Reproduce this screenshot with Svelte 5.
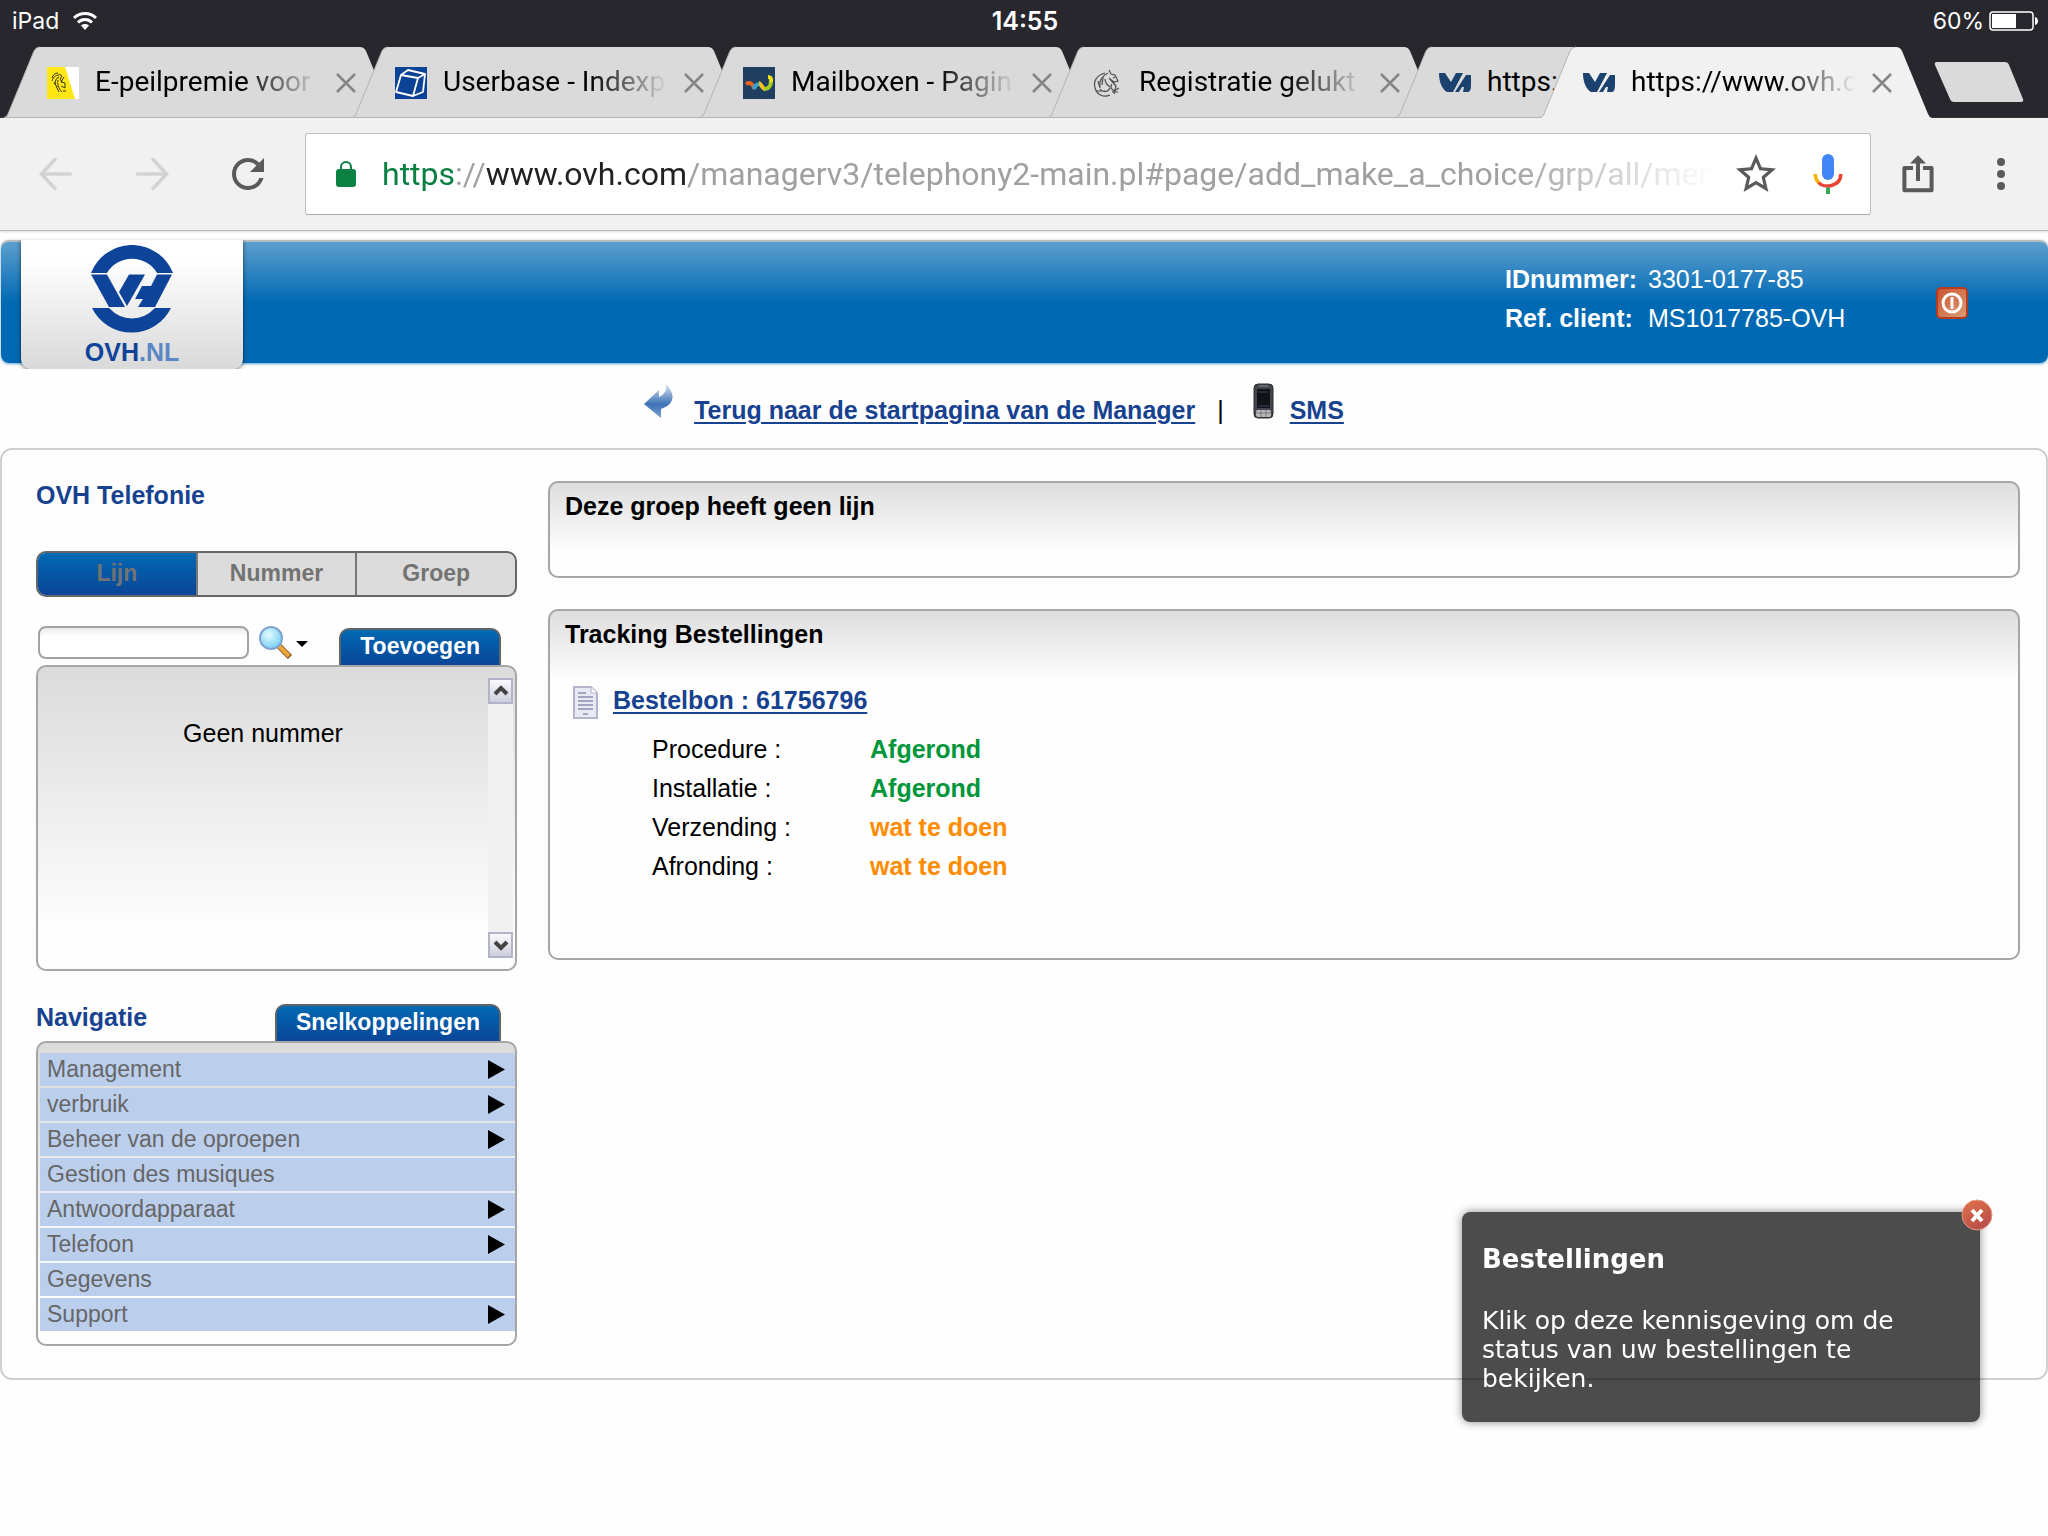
<script>
    const tabs = [
        { title: "E-peilpremie voor", icon: "lion" },
        { title: "Userbase - Indexp", icon: "cube" },
        { title: "Mailboxen - Pagin", icon: "wave" },
        { title: "Registratie gelukt", icon: "crest" },
        { title: "https:", icon: "ovh", tucked: true },
        { title: "https://www.ovh.c", icon: "ovh", active: true },
    ];

    const groups = ["Lijn", "Nummer", "Groep"];
    let currentGroup = $state("Lijn");
    let search = $state("");
    let showNotice = $state(true);

    const steps = [
        { name: "Procedure :", status: "Afgerond", done: true },
        { name: "Installatie :", status: "Afgerond", done: true },
        { name: "Verzending :", status: "wat te doen", done: false },
        { name: "Afronding :", status: "wat te doen", done: false },
    ];

    const menu = [
        { name: "Management", sub: true },
        { name: "verbruik", sub: true },
        { name: "Beheer van de oproepen", sub: true },
        { name: "Gestion des musiques", sub: false },
        { name: "Antwoordapparaat", sub: true },
        { name: "Telefoon", sub: true },
        { name: "Gegevens", sub: false },
        { name: "Support", sub: true },
    ];
</script>

{#snippet favicon(name)}
    <svg class="favicon" viewBox="0 0 32 32" aria-hidden="true">
        {#if name === "lion"}
            <rect width="32" height="32" fill="#fff" />
            <path d="M0 0h18l10 32H0z" fill="#ffe615" />
            <g fill="none" stroke="#3a3512" stroke-width="1">
                <path d="M11 6c-3 0-5 2-6 5M12 8c-4 0-6 3-7 6M12 10c-3 1-4 4-4 8M11 13c-1 3 0 8 4 12" />
                <path d="M12 7l3 2-2 3 2 3M17 10l-3 5 4 1v5l-4-2M9 19l3 6M16 24h3M7 15l3 5" />
            </g>
        {:else if name === "cube"}
            <rect width="32" height="32" fill="#0c4296" />
            <g fill="none" stroke="#fff" stroke-width="1.800" stroke-linejoin="round">
                <path d="M6 8L1 25l17 4 5-18z" />
                <path d="M6 8l7-5 17 4-7 4M30 7l-2 18-10 4" />
            </g>
        {:else if name === "wave"}
            <rect width="32" height="32" fill="#203f60" />
            <g fill="none" stroke-width="4">
                <path d="M3 17c4-2 6-1 9 5" stroke="#e8641b" />
                <path d="M11 22c1-4 3-5 6-5" stroke="#2fa3dc" />
                <path d="M16 16c2 0 3 6 6 6" stroke="#f3c316" />
                <path d="M21 22c5 0 7-4 7-8" stroke="#a5cc22" />
                <path d="M28 15c1-4-1-5-3-5" stroke="#f0e016" />
            </g>
        {:else if name === "crest"}
            <g fill="none" stroke="#4d4d4d" stroke-width="1.200">
                <path d="M14 6C6 8 2 14 4 21c2 7 9 10 15 7" />
                <path d="M17 6C11 9 8 14 9 20M18 3l2 4 4 1 3 6-4 1-4-3M18 11l7 8-2 8" />
                <path d="M9 22c3 4 8 3 10-1M6 24h8M21 17c-2 2-1 5 2 7l5-3M27 25h-6M7 14l2 7M12 10l-1 8M24 10l-2 1M14 12c0 4 2 6 5 8" />
            </g>
        {:else}
            <g fill="#1b426f">
                <path d="M0 6h6l6 9 5-9h7L14 25H8C3 22 0 15 0 6z" />
                <path d="M27 8h5v10c0 4-1 7-3 7h-5l1-5h-2l-3 5h-4z" />
            </g>
        {/if}
    </svg>
{/snippet}

<div class="browser">
    <div class="statusbar">
        <span class="device">
            iPad
            <svg width="26" height="20" viewBox="0 0 26 20" aria-hidden="true">
                <g fill="none" stroke="#fff" stroke-width="3">
                    <path d="M2 7c6-6 16-6 22 0" />
                    <path d="M6 11.500c4-4 10-4 14 0" />
                </g>
                <path d="M9 14.500c2-2 6-2 8 0l-4 4.500z" fill="#fff" />
            </svg>
        </span>
        <span class="clock">14:55</span>
        <span class="battery">
            60%
            <svg width="49" height="20" viewBox="0 0 49 20" aria-hidden="true">
                <rect x="1" y="1" width="43" height="18" rx="3" fill="none" stroke="#fff" stroke-width="1.500" />
                <rect x="3" y="3" width="24" height="14" fill="#fff" />
                <path d="M46 6c4 1 4 7 0 8z" fill="#fff" />
            </svg>
        </span>
    </div>

    <div class="tabstrip">
        {#each tabs as tab}
            <div class="tab" class:active={tab.active} class:tucked={tab.tucked}>
                <svg class="shape" viewBox="0 0 388 71" preserveAspectRatio="none" aria-hidden="true">
                    <path class="fill" d="M-2 71Q1 70 2 67L28 4Q30 0 34 0H354Q358 0 360 4L386 67Q387 70 390 71z" />
                    <path class="edge" d="M-2 70.500Q1 70 2 67L28 4Q30 0 34 0" />
                    <path class="base" d="M0 70.500H388" />
                </svg>
                {@render favicon(tab.icon)}
                <span class="title">{tab.title}</span>
                <button class="close" aria-label="Close tab">
                    <svg width="20" height="20" viewBox="0 0 20 20">
                        <path d="M1 1l18 18M19 1L1 19" stroke="#858585" stroke-width="2.500" />
                    </svg>
                </button>
            </div>
        {/each}
        <button class="newtab" aria-label="New tab">
            <svg width="90" height="40" viewBox="0 0 90 40">
                <path d="M3 0h68q3 0 4 3l14 34q1 3-2 3H20q-3 0-4-3L1 3q-1-3 2-3z" fill="#dadada" />
            </svg>
        </button>
    </div>

    <div class="toolbar">
        <button class="tool" aria-label="Back">
            <svg viewBox="0 0 24 24"><path d="M19.200 12H5M11.500 4.800L4.700 12l6.800 7.200" fill="none" stroke="#d3d3d3" stroke-width="1.800" stroke-linecap="round" /></svg>
        </button>
        <button class="tool" aria-label="Forward">
            <svg viewBox="0 0 24 24"><path d="M4.800 12H19M12.500 4.800l6.800 7.200-6.800 7.200" fill="none" stroke="#d3d3d3" stroke-width="1.800" stroke-linecap="round" /></svg>
        </button>
        <button class="tool" aria-label="Reload">
            <svg viewBox="0 0 24 24"><path d="M17.650 6.350C16.200 4.900 14.210 4 12 4c-4.420 0-7.990 3.580-7.990 8s3.570 8 7.990 8c3.730 0 6.840-2.550 7.730-6h-2.080c-.82 2.330-3.040 4-5.650 4-3.310 0-6-2.690-6-6s2.690-6 6-6c1.660 0 3.140.69 4.220 1.780L13 11h7V4l-2.350 2.350z" fill="#5a5a5a" /></svg>
        </button>
        <div class="omnibox">
            <svg class="lock" width="20" height="26" viewBox="0 0 20 26" aria-hidden="true">
                <rect y="8" width="20" height="18" rx="3" fill="#0b8043" />
                <path d="M5 9V6a5 5 0 0 1 10 0v3" fill="none" stroke="#0b8043" stroke-width="2" />
            </svg>
            <span class="url"><span class="scheme">https</span>://<span class="host">www.ovh.com</span>/managerv3/telephony2-main.pl#page/add_make_a_choice/grp/all/men</span>
            <button class="tool" aria-label="Bookmark">
                <svg viewBox="0 0 24 24"><path d="M22 9.240l-7.190-.62L12 2 9.190 8.630 2 9.240l5.460 4.730L5.820 21 12 17.270 18.180 21l-1.630-7.030L22 9.240zM12 15.400l-3.760 2.270 1-4.280-3.320-2.880 4.380-.38L12 6.100l1.710 4.040 4.380.38-3.320 2.880 1 4.280L12 15.400z" fill="#5a5a5a" /></svg>
            </button>
            <button class="tool" aria-label="Voice search">
                <svg viewBox="0 0 24 24">
                    <rect x="9" y="2" width="6" height="13" rx="3" fill="#4285f4" />
                    <path d="M5.600 12c0 1.800.7 3.300 1.800 4.400" fill="none" stroke="#f4b400" stroke-width="1.800" />
                    <path d="M7.300 16.300c2.600 2.900 11 2.300 11.100-4.300" fill="none" stroke="#ea4335" stroke-width="1.800" />
                    <path d="M11 18.800h2V22h-2z" fill="#34a853" />
                </svg>
            </button>
        </div>
        <button class="tool share" aria-label="Share">
            <svg viewBox="0 0 24 24">
                <path d="M9.500 9H5.200v11.100h13.600V9h-4.300" fill="none" stroke="#5a5a5a" stroke-width="2" stroke-linejoin="round" />
                <path d="M12 15.500V5" stroke="#5a5a5a" stroke-width="2" />
                <path d="M8 6.800L12 2.600l4 4.200z" fill="#5a5a5a" />
            </svg>
        </button>
        <button class="tool" aria-label="Menu">
            <svg viewBox="0 0 24 24" fill="#5a5a5a"><circle cx="12" cy="6" r="2" /><circle cx="12" cy="12" r="2" /><circle cx="12" cy="18" r="2" /></svg>
        </button>
    </div>
</div>

<div class="page">
    <header>
        <div class="logo">
            <svg width="82" height="88" viewBox="0 0 82 88" aria-hidden="true">
                <g fill="#0d4499">
                    <path d="M0 28A44 44 0 0 1 82 28H66A29 29 0 0 0 16 28z" />
                    <path d="M1 63H18Q28 73.500 41 73.500T64 63H80A44 44 0 0 1 1 63z" />
                    <path d="M0 29.500H16L34 62H18z" />
                    <path d="M38 29.500H54L36 61 28 47z" />
                    <path d="M66 29.500H81L64 62H47L52 54H44L51 41H60z" />
                </g>
            </svg>
            <strong>OVH<span>.NL</span></strong>
        </div>
        <dl>
            <dt>IDnummer:</dt>
            <dd>3301-0177-85</dd>
            <dt>Ref. client:</dt>
            <dd>MS1017785-OVH</dd>
        </dl>
        <button class="logout" aria-label="Log out">
            <svg width="32" height="32" viewBox="0 0 32 32">
                <defs>
                    <linearGradient id="power" x1="0" y1="0" x2="1" y2="1">
                        <stop offset="0" stop-color="#c9512e" />
                        <stop offset="1" stop-color="#dba078" />
                    </linearGradient>
                </defs>
                <rect x="1" y="1" width="30" height="30" rx="4" fill="url(#power)" stroke="#b73a1c" stroke-width="2" />
                <circle cx="16" cy="16" r="9" fill="none" stroke="#fff" stroke-width="3" />
                <path d="M16 10v12" stroke="#fff" stroke-width="3" />
            </svg>
        </button>
    </header>

    <nav class="links">
        <svg width="30" height="37" viewBox="0 0 30 37" aria-hidden="true">
            <defs>
                <linearGradient id="back" x1="0" y1="0" x2="0" y2="1">
                    <stop offset="0" stop-color="#dbe5f2" />
                    <stop offset=".6" stop-color="#3d72b4" />
                    <stop offset="1" stop-color="#7b9fce" />
                </linearGradient>
            </defs>
            <path d="M0 20L15 6v7c5-2 8-6 7-13 9 9 10 20-5 25v9z" fill="url(#back)" />
        </svg>
        <a class="home" href="#manager">Terug naar de startpagina van de Manager</a>
        <span class="bar">|</span>
        <svg width="21" height="38" viewBox="0 0 21 38" aria-hidden="true">
            <rect x="1" y="1" width="19" height="34" rx="4" fill="#42454b" stroke="#2b2d31" />
            <rect x="4" y="6" width="13" height="19" fill="#111318" />
            <path d="M6 3h9" stroke="#8b8e94" />
            <path d="M5 9h10M5 23h11" stroke="#3a4560" />
            <rect x="3" y="27" width="15" height="7" rx="2" fill="#b9b9b9" />
            <path d="M8 27v7M13 27v7M3 30h15" stroke="#777" />
        </svg>
        <a href="#sms">SMS</a>
    </nav>

    <main>
        <aside>
            <h2>OVH Telefonie</h2>
            <div class="segments">
                {#each groups as group}
                    <button
                        class:selected={currentGroup === group}
                        onclick={() => (currentGroup = group)}
                    >
                        {group}
                    </button>
                {/each}
            </div>

            <div class="search">
                <input type="text" aria-label="Zoeken" bind:value={search} />
                <button class="find" aria-label="Zoekopties">
                    <svg width="49" height="33" viewBox="0 0 49 33">
                        <defs>
                            <radialGradient id="lens" cx=".4" cy=".35" r=".7">
                                <stop offset="0" stop-color="#e2fbff" />
                                <stop offset="1" stop-color="#74cdf5" />
                            </radialGradient>
                        </defs>
                        <path d="M20 20l11 11" stroke="#8b5a20" stroke-width="6" />
                        <path d="M20 20l10 10" stroke="#eda63c" stroke-width="4" />
                        <circle cx="12" cy="12" r="11" fill="url(#lens)" stroke="#7fa3cf" stroke-width="2" />
                        <path d="M37 15h12l-6 6z" fill="#000" />
                    </svg>
                </button>
                <button class="flap">Toevoegen</button>
            </div>
            <div class="numbers">
                <p>Geen nummer</p>
                <div class="scroller">
                    <button aria-label="Omhoog">
                        <svg width="16" height="12" viewBox="0 0 16 12"><path d="M2 9l6-6 6 6" fill="none" stroke="#444" stroke-width="4" /></svg>
                    </button>
                    <button aria-label="Omlaag">
                        <svg width="16" height="12" viewBox="0 0 16 12"><path d="M2 3l6 6 6-6" fill="none" stroke="#444" stroke-width="4" /></svg>
                    </button>
                </div>
            </div>

            <div class="navhead">
                <h2>Navigatie</h2>
                <button class="flap">Snelkoppelingen</button>
            </div>
            <nav class="menu">
                {#each menu as item}
                    <a href="#menu">
                        {item.name}
                        {#if item.sub}
                            <svg width="17" height="19" viewBox="0 0 17 19" aria-hidden="true"><path d="M0 0l17 9.500L0 19z" /></svg>
                        {/if}
                    </a>
                {/each}
            </nav>
        </aside>

        <div class="content">
            <section class="notice">
                <h3>Deze groep heeft geen lijn</h3>
            </section>
            <section class="tracking">
                <h3>Tracking Bestellingen</h3>
                <div class="order">
                    <svg width="25" height="33" viewBox="0 0 25 33" aria-hidden="true">
                        <path d="M1 1h17l6 6v25H1z" fill="#e9e9f4" stroke="#b4b4cb" stroke-width="2" />
                        <path d="M18 1v6h6" fill="#fff" stroke="#b4b4cb" />
                        <path d="M5 7h8M5 11h15M5 15h15M5 19h15M5 23h15M10 28h5" stroke="#8d8db0" stroke-width="1.500" />
                    </svg>
                    <a href="#order">Bestelbon : 61756796</a>
                </div>
                <table>
                    <tbody>
                        {#each steps as step}
                            <tr>
                                <th scope="row">{step.name}</th>
                                <td class:done={step.done}>{step.status}</td>
                            </tr>
                        {/each}
                    </tbody>
                </table>
            </section>
        </div>
    </main>
</div>

{#if showNotice}
    <div class="toast" role="status">
        <h4>Bestellingen</h4>
        <p>Klik op deze kennisgeving om de status van uw bestellingen te bekijken.</p>
        <button aria-label="Sluiten" onclick={() => (showNotice = false)}>
            <svg width="32" height="32" viewBox="0 0 32 32">
                <defs>
                    <linearGradient id="dismiss" x1="0" y1="0" x2="0.500" y2="1">
                        <stop offset="0" stop-color="#e2714a" />
                        <stop offset="1" stop-color="#b9504a" />
                    </linearGradient>
                </defs>
                <circle cx="16" cy="16" r="15" fill="url(#dismiss)" stroke="#e79a86" />
                <path d="M11 11l10 11M21 11L11 22" stroke="#fff" stroke-width="4" />
            </svg>
        </button>
    </div>
{/if}

<style>
    :global(body) {
        margin: 0;
        background: #fefefe;
        font-family: "Liberation Sans", Arial, sans-serif;
        font-size: 25px;
        color: #000;
    }

    button {
        appearance: none;
        border: none;
        background: none;
        padding: 0;
        margin: 0;
        font: inherit;
        cursor: pointer;
    }

    svg {
        display: block;
        flex: none;
    }

    h2,
    h3,
    h4,
    p,
    dl,
    dd {
        margin: 0;
    }

    /* browser chrome */
    .browser {
        font-family: Roboto, sans-serif;
    }

    .statusbar {
        display: grid;
        grid-template-columns: 1fr auto 1fr;
        align-items: center;
        height: 41px;
        padding: 0 10px 0 12px;
        background: #28272d;
        color: #fff;
        font-family: Inter, sans-serif;
        font-size: 23px;
    }

    .device,
    .battery {
        display: flex;
        align-items: center;
        gap: 13px;
    }

    .battery {
        justify-content: flex-end;
        gap: 5px;
    }

    .clock {
        font-size: 25px;
        font-weight: 600;
    }

    .tabstrip {
        display: flex;
        height: 71px;
        padding: 6px 0 0 6px;
        background: #28272d;
    }

    .tab {
        position: relative;
        display: flex;
        align-items: center;
        flex: none;
        width: 388px;
        box-sizing: border-box;
        margin-right: -40px;
        padding: 0 38px 0 41px;
    }

    .tab.tucked {
        margin-right: -244px;
    }

    .tab.active {
        margin-right: 0;
    }

    .shape {
        position: absolute;
        inset: 0;
        width: 100%;
        height: 100%;
        overflow: visible;
    }

    .fill {
        fill: #dadada;
    }

    .active .fill {
        fill: #f1f1f1;
    }

    .edge,
    .base {
        fill: none;
        stroke: #b4b4b4;
    }

    .active .base {
        display: none;
    }

    .favicon {
        position: relative;
        width: 32px;
        height: 32px;
    }

    .title {
        position: relative;
        flex: 1;
        margin-left: 16px;
        padding-bottom: 2px;
        overflow: hidden;
        white-space: nowrap;
        font-size: 28px;
        mask-image: linear-gradient(to right, #000 65%, transparent);
    }

    .tucked .title {
        flex: none;
        mask-image: none;
    }

    .close {
        position: relative;
        margin-left: 16px;
    }

    .newtab {
        align-self: flex-start;
        margin: 15px 0 0 4px;
    }

    .toolbar {
        display: flex;
        align-items: center;
        height: 112px;
        padding: 0 23px 0 32px;
        background: #f1f1f1;
        border-bottom: 1px solid #b9b9b9;
        box-shadow: 0 1px 2px #ddd;
    }

    .tool {
        margin-right: 48px;
    }

    .tool svg {
        width: 48px;
        height: 48px;
    }

    .tool:last-child {
        margin-right: 0;
    }

    .omnibox {
        display: flex;
        align-items: center;
        flex: 1;
        min-width: 0;
        height: 80px;
        margin: 0 23px 0 -15px;
        padding: 0 18px 0 30px;
        background: #fff;
        border: 1px solid #c3c3c3;
        border-bottom-color: #a9a9a9;
        border-radius: 3px;
    }

    .omnibox .tool {
        margin: 0 0 0 24px;
    }

    .omnibox .tool:nth-of-type(1) {
        margin-left: 17px;
    }

    .url {
        flex: 1;
        margin-left: 26px;
        overflow: hidden;
        white-space: nowrap;
        font-size: 32px;
        color: #a0a0a0;
        mask-image: linear-gradient(to right, #000 84%, transparent);
    }

    .scheme {
        color: #0b8043;
    }

    .host {
        color: #222;
    }

    .share {
        margin-right: 35px;
    }

    /* manager page */
    .page {
        padding-top: 9px;
    }

    header {
        display: flex;
        align-items: center;
        height: 121px;
        margin-left: 1px;
        border-top: 2px solid #b5bcc0;
        border-radius: 8px;
        background: linear-gradient(#5c9fce, #0069b3 50%);
        box-shadow: 0 1px 3px #0069b399;
        color: #fff;
    }

    .logo {
        display: flex;
        flex-direction: column;
        align-items: center;
        align-self: flex-start;
        width: 222px;
        height: 124px;
        margin: -2px auto 0 20px;
        padding-top: 5px;
        border-radius: 0 0 10px 10px;
        background: linear-gradient(#fff 15%, #d9d9d9);
        box-shadow: 0 1px 4px #0009;
        clip-path: inset(0 -8px 0 -8px);
    }

    .logo strong {
        font-size: 25px;
        line-height: 39px;
        color: #0d4499;
    }

    .logo span {
        color: #5c86c4;
    }

    dl {
        display: grid;
        grid-template-columns: 143px 288px;
        padding-bottom: 7px;
        line-height: 39px;
    }

    dt {
        font-weight: bold;
    }

    .logout {
        margin-right: 80px;
    }

    .links {
        display: flex;
        align-items: flex-end;
        justify-content: center;
        height: 58px;
        padding: 0 60px 27px 0;
    }

    .links a {
        margin-left: 16px;
        line-height: 22px;
    }

    .links .home {
        margin-left: 20px;
    }

    .bar {
        margin: 0 29px 0 22px;
        line-height: 22px;
    }

    a {
        color: #17428f;
        font-weight: bold;
        text-underline-offset: 3px;
    }

    main {
        display: flex;
        align-items: flex-start;
        gap: 31px;
        padding: 31px 26px 32px 34px;
        border: 2px solid #d0d0d0;
        border-radius: 12px;
    }

    aside {
        flex: none;
        width: 481px;
    }

    h2 {
        font-size: 25px;
        line-height: 28px;
        color: #17428f;
    }

    .segments {
        display: flex;
        height: 42px;
        margin-top: 42px;
        border: 2px solid #666;
        border-radius: 10px;
        overflow: hidden;
        background: #dcdcdc;
    }

    .segments button {
        flex: 1;
        padding-bottom: 2px;
        font-size: 23px;
        font-weight: bold;
        color: #737373;
    }

    .segments button + button {
        border-left: 2px solid #777;
    }

    .segments .selected {
        background: linear-gradient(#0069b3, #0b4598);
    }

    .search {
        display: flex;
        align-items: flex-start;
        height: 39px;
        margin-top: 29px;
        padding: 0 16px 0 2px;
    }

    input {
        box-sizing: border-box;
        width: 211px;
        height: 33px;
        padding: 0 8px;
        border: 2px solid #a3a3a3;
        border-radius: 8px;
        background: linear-gradient(#ececec, #fff 30%);
        font: inherit;
        font-size: 23px;
    }

    .find {
        margin-left: 10px;
    }

    .flap {
        align-self: flex-end;
        height: 37px;
        margin-left: auto;
        padding: 0 19px 3px;
        border: 2px solid #5f6468;
        border-bottom: none;
        border-radius: 10px 10px 0 0;
        background: linear-gradient(#0069b3, #0b4598);
        color: #fff;
        font-size: 23px;
        font-weight: bold;
    }

    .numbers {
        display: flex;
        height: 280px;
        padding: 11px 2px 11px 0;
        border: 2px solid #a6a6a6;
        border-radius: 10px;
        background: linear-gradient(#dbdbdb, #fefefe 88%);
    }

    .numbers p {
        flex: 1;
        padding-top: 41px;
        text-align: center;
    }

    .scroller {
        display: flex;
        flex-direction: column;
        justify-content: space-between;
        width: 25px;
        background: #f1f1f1;
    }

    .scroller button {
        display: flex;
        align-items: center;
        justify-content: center;
        height: 26px;
        border: 2px solid #b3b4c8;
        background: linear-gradient(#fafafd, #cfcfdd);
    }

    .navhead {
        display: flex;
        justify-content: space-between;
        height: 38px;
        margin-top: 32px;
        padding-right: 16px;
    }

    .menu {
        display: flex;
        flex-direction: column;
        gap: 2px;
        padding: 10px 0 13px 2px;
        border: 2px solid #a6a6a6;
        border-radius: 10px;
        background: linear-gradient(#dbdbdb, #fefefe 88%);
    }

    .menu a {
        display: flex;
        align-items: center;
        justify-content: space-between;
        padding: 0 10px 0 7px;
        background: #bbcfed;
        color: #666;
        font-size: 23px;
        font-weight: normal;
        line-height: 33px;
        text-decoration: none;
    }

    .menu svg {
        fill: #000;
    }

    .content {
        flex: 1;
        display: flex;
        flex-direction: column;
        gap: 31px;
    }

    section {
        padding: 9px 15px;
        border: 2px solid #a6a6a6;
        border-radius: 10px;
        background: linear-gradient(#dedede, #fefefe 70px);
    }

    h3 {
        font-size: 25px;
        line-height: 28px;
    }

    .notice {
        padding-bottom: 56px;
    }

    .tracking {
        padding-bottom: 72px;
    }

    .order {
        display: flex;
        align-items: flex-start;
        gap: 15px;
        margin: 38px 0 11px 8px;
    }

    .order a {
        line-height: 28px;
    }

    table {
        margin-left: 87px;
        border-collapse: collapse;
        line-height: 39px;
    }

    th {
        width: 218px;
        padding: 0;
        font-weight: normal;
        text-align: left;
    }

    td {
        padding: 0;
        font-weight: bold;
        color: #ff8c00;
    }

    .done {
        color: #009639;
    }

    /* floats above the page in the lower right corner */
    .toast {
        position: fixed;
        right: 68px;
        bottom: 114px;
        box-sizing: border-box;
        width: 518px;
        padding: 33px 60px 29px 20px;
        border-radius: 8px;
        background: #000000b3;
        box-shadow: 0 0 10px #0007;
        color: #fff;
        font-family: "DejaVu Sans", Verdana, sans-serif;
        font-size: 25px;
        line-height: 29px;
    }

    .toast h4 {
        margin-bottom: 32px;
        font-size: 26px;
    }

    .toast button {
        position: absolute;
        top: -13px;
        right: -13px;
    }
</style>
